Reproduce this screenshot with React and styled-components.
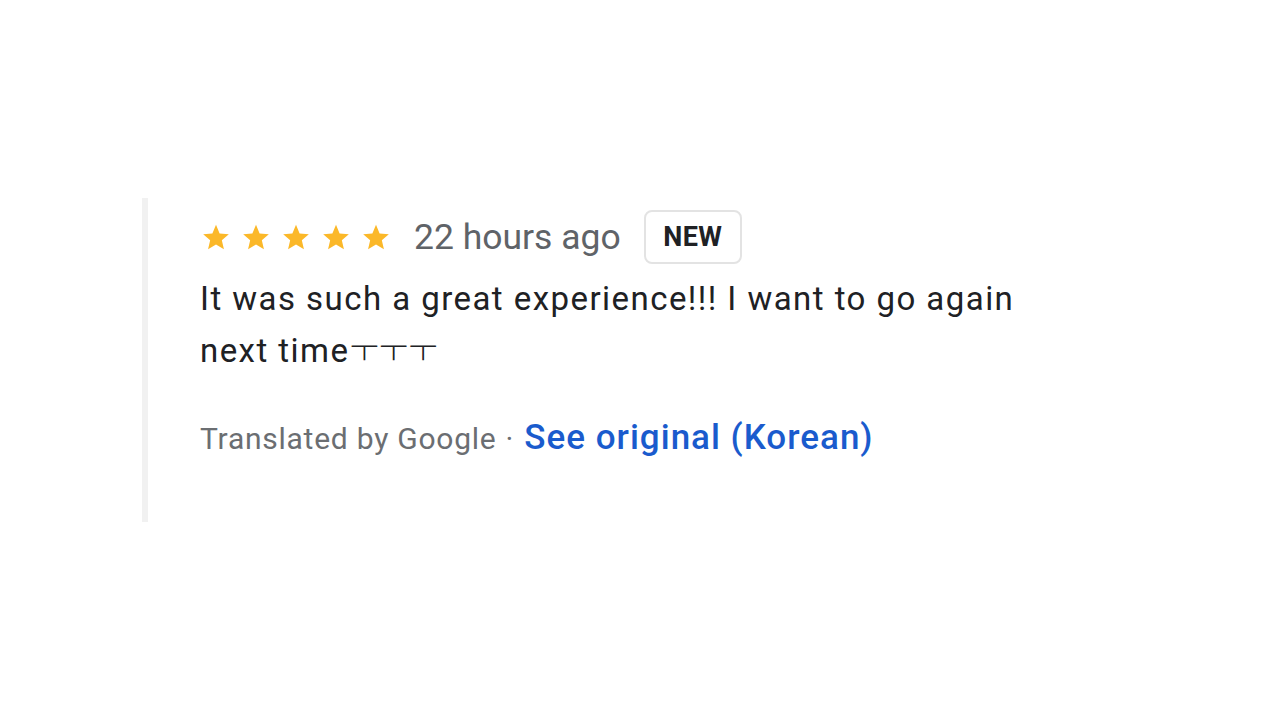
import React from 'react';
import styled, { createGlobalStyle } from 'styled-components';

const GlobalStyle = createGlobalStyle`
  body {
    margin: 0;
    background: #fff;
    font-family: Roboto, "Liberation Sans", Arial, sans-serif;
  }
`;

const Page = styled.div`
  width: 1280px;
  height: 720px;
  padding: 198px 0 0 142px;
  box-sizing: border-box;
`;

const Review = styled.div`
  border-left: 6px solid #f1f1f1;
  height: 324px;
  box-sizing: border-box;
  padding-left: 52px;
  padding-top: 12px;
`;

const TopRow = styled.div`
  display: flex;
  align-items: center;
  height: 54px;
`;

const Stars = styled.div`
  display: flex;
  gap: 12px;
  margin-right: 24px;
  padding-left: 2px;
`;

const Ago = styled.span`
  font-size: 35.5px;
  color: #5f6368;
  margin-right: 23px;
`;

const Badge = styled.span`
  display: inline-flex;
  align-items: center;
  justify-content: center;
  width: 98px;
  height: 54px;
  box-sizing: border-box;
  border: 2px solid #e3e3e3;
  border-radius: 8px;
  font-size: 27px;
  font-weight: 700;
  letter-spacing: 0.3px;
  color: #202124;
`;

const Body = styled.p`
  margin: 9px 0 0;
  font-size: 33px;
  letter-spacing: 1.45px;
  line-height: 52px;
  color: #202124;
  width: 840px;
`;

const Cry = styled.span`
  font-family: "Noto Sans CJK KR", sans-serif;
  font-size: 32px;
  font-weight: 300;
  letter-spacing: 0;
  line-height: 1;
`;

const Footer = styled.div`
  margin-top: 40px;
  display: flex;
  align-items: baseline;
`;

const Muted = styled.span`
  font-size: 30px;
  letter-spacing: 0.75px;
  color: #6b6e72;
`;

const Dot = styled.span`
  font-size: 30px;
  color: #6b6e72;
  margin: 0 11px 0 9px;
`;

const Link = styled.a`
  font-size: 35px;
  font-weight: 500;
  letter-spacing: 1px;
  color: #1a5bcd;
  text-decoration: none;
`;

const Star = () => (
  <svg width="28" height="28" viewBox="0 0 24 24">
    <path
      fill="#fbb829"
      d="M12 1.6l3.1 7.3 7.9.7-6 5.2 1.8 7.7L12 18.4l-6.8 4.1 1.8-7.7-6-5.2 7.9-.7z"
    />
  </svg>
);

const App = () => (
  <Page>
    <GlobalStyle />
    <Review>
      <TopRow>
        <Stars>
          {[0, 1, 2, 3, 4].map((i) => <Star key={i} />)}
        </Stars>
        <Ago>22 hours ago</Ago>
        <Badge>NEW</Badge>
      </TopRow>
      <Body>
        It was such a great experience!!! I want to go again next time<Cry>ㅜㅜㅜ</Cry>
      </Body>
      <Footer>
        <Muted>Translated by Google</Muted>
        <Dot>·</Dot>
        <Link href="#">See original (Korean)</Link>
      </Footer>
    </Review>
  </Page>
);

export default App;
